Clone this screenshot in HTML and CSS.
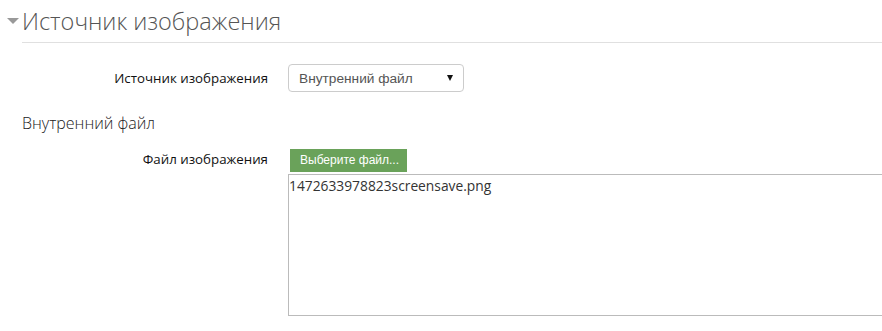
FILE: index.html
```html
<!DOCTYPE html>
<html lang="ru">
<head>
<meta charset="utf-8">
<link rel="stylesheet" href="styles.css">
</head>
<body>
<div class="page">
  <div class="legend">
    <span class="caret"></span>
    <span class="legend-text">Источник изображения</span>
  </div>
  <div class="content">
    <div class="row row-select">
      <div class="label">Источник изображения</div>
      <div class="control">
        <div class="select">
          <span>Внутренний файл</span>
          <span class="arrow"></span>
        </div>
      </div>
    </div>
    <div class="subhead">Внутренний файл</div>
    <div class="row row-file">
      <div class="label">Файл изображения</div>
      <div class="control file-control">
        <div class="btn">Выберите файл...</div>
        <div class="filebox">1472633978823screensave.png</div>
      </div>
    </div>
  </div>
</div>
</body>
</html>
```
FILE: styles.css
```css
html, body {
  margin: 0;
  padding: 0;
  background: #fff;
}
body {
  font-family: "Open Sans", "Liberation Sans", sans-serif;
  color: #333;
  overflow: hidden;
}
.page {
  width: 882px;
}
.legend {
  display: flex;
  align-items: center;
  height: 42px;
  border-bottom: 1px solid #e0e0e0;
  margin-left: 22px;
  position: relative;
}
.caret {
  position: absolute;
  left: -15px;
  top: 18px;
  width: 0;
  height: 0;
  border-left: 6px solid transparent;
  border-right: 6px solid transparent;
  border-top: 6px solid #999;
}
.legend-text {
  font-size: 23.5px;
  font-weight: 300;
  color: #555;
  margin-top: -1px;
  white-space: nowrap;
}
.content {
  padding-top: 21px;
}
.row {
  display: grid;
  grid-template-columns: 268px 1fr;
  column-gap: 20px;
}
.label {
  text-align: right;
  font-size: 13.3px;
  color: #111;
  white-space: nowrap;
}
.row-select .label {
  padding-top: 5px;
}
.select {
  border: 1px solid #ccc;
  border-radius: 4px;
  display: flex;
  align-items: center;
  justify-content: space-between;
  padding: 0 10px 0 10px;
  box-sizing: border-box;
  width: 176px;
  height: 28px;
  font-family: "Liberation Sans", Arial, sans-serif;
  font-size: 13.7px;
  color: #555;
}
.arrow {
  width: 0;
  height: 0;
  border-left: 3.5px solid transparent;
  border-right: 3.5px solid transparent;
  border-top: 6px solid #111;
}
.subhead {
  margin: 20px 0 0 22px;
  font-size: 16px;
  color: #222;
  font-weight: 300;
  height: 22px;
}
.row-file {
  margin-top: 15px;
}
.row-file .label {
  padding-top: 1px;
}
.file-control {
  display: flex;
  flex-direction: column;
  align-items: flex-start;
}
.btn {
  margin-left: 2px;
  background: #6aa25a;
  color: #fff;
  font-family: "Liberation Sans", Arial, sans-serif;
  font-size: 12px;
  height: 23px;
  line-height: 23px;
  padding: 0 10px;
  box-sizing: border-box;
  width: 117px;
  white-space: nowrap;
}
.filebox {
  margin-top: 2px;
  width: 600px;
  height: 142px;
  box-sizing: border-box;
  border: 1px solid #bbb;
  font-size: 13.8px;
  color: #333;
  padding: 1px 0 0 0;
  line-height: 19px;
}
```
